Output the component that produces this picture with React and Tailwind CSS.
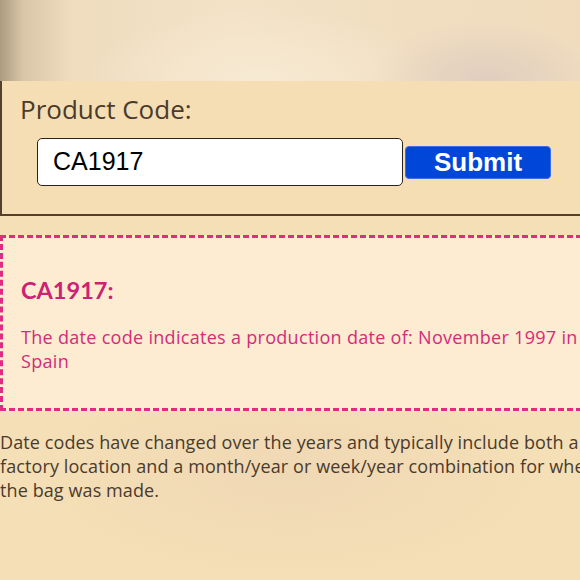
import React from "react";

// Header strip: blurred photo backdrop, drawn as a gradient
const Backdrop = () => (
  <div className="h-[81px] w-full bg-[radial-gradient(ellipse_20%_75%_at_84%_100%,#e0cdbf_0%,rgba(224,205,191,0)_100%),radial-gradient(ellipse_30%_90%_at_45%_100%,#f7ead3_0%,rgba(247,234,211,0)_100%),linear-gradient(90deg,#ad9b7f_0%,#d9c6a8_4%,#efdcbf_12%,#f3e2c6_40%,#f1dec1_70%,#f0dcbd_100%)]" />
);

const ProductForm = () => (
  <div className="bg-[#f5deb4] border-l-2 border-b-2 border-[#54412d] h-[135px] pl-[18px] pt-[10px]">
    <div className="font-['Open_Sans',sans-serif] text-[26px] leading-[36px] text-[#4a3b2c]">
      Product Code:
    </div>
    <div className="flex items-center mt-[11px] ml-[17px] font-['Liberation_Sans',Arial,sans-serif]">
      <div className="w-[366px] h-[48px] bg-white border border-[#2b241c] rounded-[5px] flex items-center pl-[15px] text-[25px] text-black">
        CA1917
      </div>
      <button className="ml-[2px] w-[146px] h-[33px] bg-[#0047d9] rounded-[4px] border border-[#3c6ee6] text-white font-bold text-[26px] leading-none flex items-center justify-center">
        Submit
      </button>
    </div>
  </div>
);

const Result = () => (
  <div className="mt-[19px] w-[600px] h-[176px] bg-[#fdebd2] border-[3px] border-dashed border-[#e02c80] pl-[18px] pt-[37px]">
    <div className="font-['Lato',sans-serif] text-[23.5px] font-bold text-[#cc2174] leading-[30px]">CA1917:</div>
    <p className="mt-[20px] w-[565px] font-['Open_Sans',sans-serif] text-[18px] tracking-[0.3px] leading-[24px] text-[#d42b7b]">
      The date code indicates a production date of: November 1997 in Spain
    </p>
  </div>
);

export default function App() {
  return (
    <div className="w-[580px] h-[580px] overflow-hidden bg-[#f5dfb6] bg-[radial-gradient(ellipse_45%_18%_at_50%_82%,#efd8b4_0%,rgba(239,216,180,0)_100%)]">
      <Backdrop />
      <ProductForm />
      <Result />
      <p className="mt-[19px] w-[610px] font-['Open_Sans',sans-serif] text-[18px] tracking-[0.1px] leading-[24px] text-[#4a3b2c]">
        Date codes have changed over the years and typically include both a factory location and a month/year or week/year combination for when the bag was made.
      </p>
    </div>
  );
}
